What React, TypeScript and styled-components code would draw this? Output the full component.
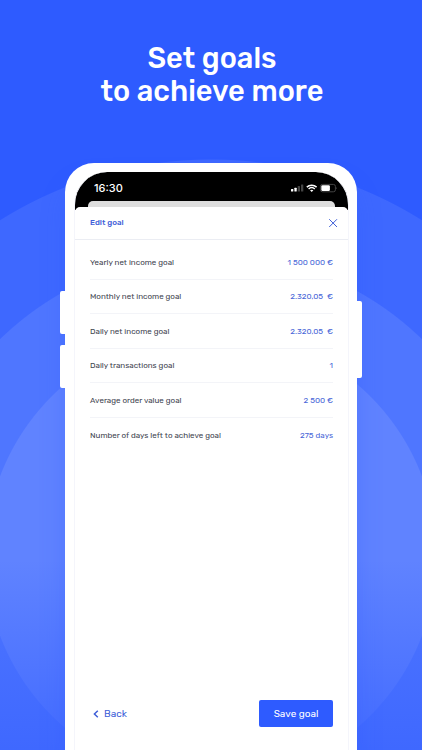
import React from "react";
import styled, { createGlobalStyle } from "styled-components";

const GlobalStyle = createGlobalStyle`
  *, *::before, *::after { box-sizing: border-box; }
  body {
    margin: 0;
    font-family: Rubik, Roboto, "Liberation Sans", sans-serif;
  }
  button { font: inherit; border: 0; padding: 0; background: none; cursor: pointer; }
`;

const Page = styled.main`
  min-height: 100vh;
  display: flex;
  flex-direction: column;
  align-items: center;
  overflow: hidden;
  background:
    linear-gradient(to bottom, rgba(58, 100, 255, 0) 560px, rgba(58, 100, 255, 0.85) 770px),
    radial-gradient(
      circle at 50% 556px,
      #6083ff 225px,
      #4f76ff 226px,
      #4f76ff 302px,
      #3e68ff 303px,
      #3e68ff 396px,
      #2e5bff 397px
    );
`;

const Title = styled.h1`
  margin: 0;
  padding: 42px 16px 55px 18px;
  color: #fff;
  font-size: 29px;
  line-height: 33px;
  font-weight: 500;
  text-align: center;
`;

const Phone = styled.section`
  position: relative;
  flex: 1;
  width: calc(100% - 130px);
  max-width: 420px;
  display: flex;
  flex-direction: column;
  padding: 9px 8px 0 9px;
  background: #fff;
  border-radius: 29px 29px 0 0;
  box-shadow: 0 20px 24px rgba(46, 91, 255, 0.3);
`;

const SideKey = styled.span<{ $side: "left" | "right"; $top: number; $height: number }>`
  position: absolute;
  top: ${(p) => p.$top}px;
  ${(p) => p.$side}: -5px;
  width: 5px;
  height: ${(p) => p.$height}px;
  background: #fff;
  border-radius: ${(p) => (p.$side === "left" ? "2px 0 0 2px" : "0 2px 2px 0")};
`;

const Screen = styled.div`
  flex: 1;
  display: flex;
  flex-direction: column;
  overflow: hidden;
  border: 1px solid #f4f5fb;
  border-width: 0 1px;
  border-radius: 33px 33px 0 0;
  background: linear-gradient(#000 38px, #fff 38px);
`;

const StatusBar = styled.header`
  height: 29px;
  display: flex;
  align-items: center;
  justify-content: space-between;
  padding: 3px 10px 0 19px;
  color: #fff;
  font-size: 11px;
  line-height: 14px;
  font-weight: 500;
  font-family: Inter, Roboto, sans-serif;
`;

const StatusIcons = styled.svg`
  width: 48px;
  height: 10px;
`;

const BackSheet = styled.div`
  height: 6px;
  margin: 0 13px;
  background: #dedede;
  border-radius: 5px 5px 0 0;
`;

const Sheet = styled.div`
  flex: 1;
  display: flex;
  flex-direction: column;
  background: #fff;
  border-radius: 5px 5px 0 0;
`;

const SheetHeader = styled.div`
  height: 33px;
  display: flex;
  align-items: center;
  justify-content: space-between;
  padding: 0 10px 0 15px;
  border-bottom: 1px solid #ebedf3;
`;

const SheetTitle = styled.h2`
  margin: 0;
  color: #3f5fd8;
  font-size: 8px;
  line-height: 12px;
  font-weight: 500;
`;

const CloseButton = styled.button`
  display: flex;

  svg { width: 10px; height: 10px; }
`;

const Goals = styled.dl`
  height: 207px;
  margin: 5px 15px 0;
  display: grid;
  grid-auto-rows: 1fr;
`;

const Goal = styled.div`
  display: flex;
  align-items: center;
  justify-content: space-between;
  padding-top: 2px;
  font-size: 8px;
  line-height: 12px;

  &:not(:last-child) { border-bottom: 1px solid #f3f4f8; }
`;

const GoalName = styled.dt`
  color: #41444f;
`;

const GoalValue = styled.dd`
  margin: 0;
  color: #4866d8;
  white-space: pre;
`;

const Footer = styled.footer`
  margin-top: auto;
  padding: 0 15px 23px 18px;
  display: flex;
  align-items: center;
  justify-content: space-between;
  font-size: 10px;
  line-height: 14px;
`;

const BackButton = styled.button`
  display: flex;
  align-items: center;
  gap: 5px;
  color: #3f5fd8;

  svg { width: 6px; height: 8px; }
`;

const SaveButton = styled.button`
  width: 74px;
  height: 27px;
  color: #fff;
  background: #2e5bff;
  border-radius: 2px;
`;

const goals = [
  ["Yearly net income goal", "1 500 000 €"],
  ["Monthly net income goal", "2.320,05  €"],
  ["Daily net income goal", "2.320,05  €"],
  ["Daily transactions goal", "1"],
  ["Average order value goal", "2 500 €"],
  ["Number of days left to achieve goal", "275 days"],
];

export default function App() {
  return (
    <>
      <GlobalStyle />
      <Page>
        <Title>
          Set goals
          <br />
          to achieve more
        </Title>
        <Phone>
          <SideKey $side="left" $top={128} $height={43} />
          <SideKey $side="left" $top={182} $height={43} />
          <SideKey $side="right" $top={138} $height={77} />
          <Screen>
            <StatusBar>
              <span>16:30</span>
              <StatusIcons viewBox="0 0 48 10" aria-hidden="true">
                <rect x="1" y="6" width="2.3" height="2.6" rx="0.5" fill="#fff" />
                <rect x="4.4" y="4.7" width="2.3" height="3.9" rx="0.5" fill="#fff" />
                <rect x="7.7" y="3" width="2.3" height="5.6" rx="0.5" fill="#444" />
                <rect x="11" y="1.4" width="2.3" height="7.2" rx="0.5" fill="#444" />
                <g fill="none" stroke="#fff" strokeWidth="1.5">
                  <path d="M16.8 4.1a7.2 7.2 0 0 1 9.8 0" />
                  <path d="M18.6 6a4.6 4.6 0 0 1 6.2 0" />
                </g>
                <path d="M20 7.3q1.7-1.3 3.4 0L21.7 9z" fill="#fff" />
                <rect x="30.4" y="1.4" width="15" height="7.4" rx="2" fill="none" stroke="#555" strokeWidth="0.8" />
                <rect x="31.3" y="2.3" width="8.6" height="5.6" rx="1.2" fill="#fff" />
                <path d="M46.4 3.9q1.3 1.2 0 2.4z" fill="#555" />
              </StatusIcons>
            </StatusBar>
            <BackSheet />
            <Sheet>
              <SheetHeader>
                <SheetTitle>Edit goal</SheetTitle>
                <CloseButton type="button" aria-label="Close">
                  <svg viewBox="0 0 10 10" fill="none" stroke="#3f5fd8" strokeLinecap="round">
                    <path d="M1.5 1.5l7.2 7.2M8.7 1.5L1.5 8.7" />
                  </svg>
                </CloseButton>
              </SheetHeader>
              <Goals>
                {goals.map(([name, value]) => (
                  <Goal key={name}>
                    <GoalName>{name}</GoalName>
                    <GoalValue>{value}</GoalValue>
                  </Goal>
                ))}
              </Goals>
              <Footer>
                <BackButton type="button">
                  <svg viewBox="0 0 6 8" fill="none" stroke="#3f5fd8" strokeWidth="1.5" aria-hidden="true">
                    <path d="M4.8 0.7L1.4 4l3.4 3.3" />
                  </svg>
                  Back
                </BackButton>
                <SaveButton type="button">Save goal</SaveButton>
              </Footer>
            </Sheet>
          </Screen>
        </Phone>
      </Page>
    </>
  );
}
